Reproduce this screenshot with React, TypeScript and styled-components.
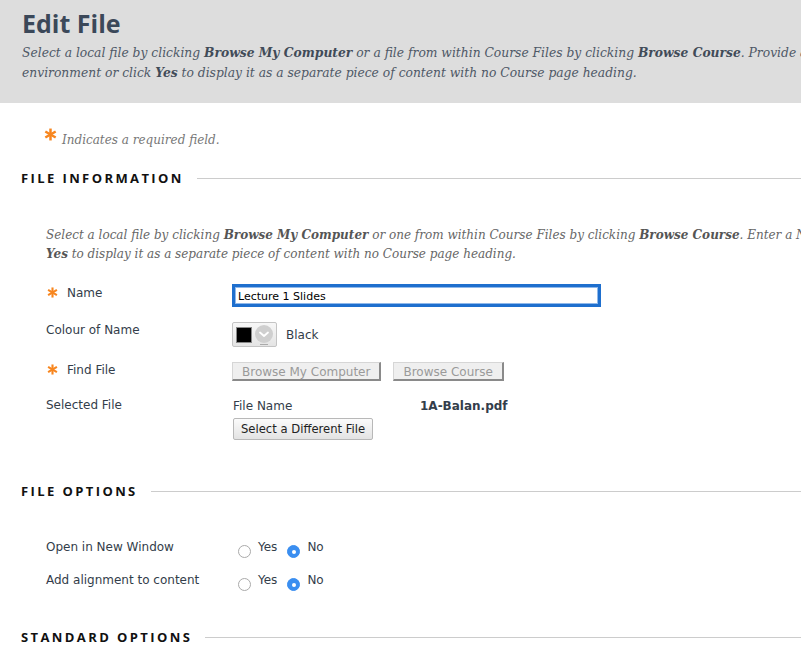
import React from "react";
import styled, { createGlobalStyle } from "styled-components";

const Global = createGlobalStyle`
  html, body { margin: 0; padding: 0; background: #fff; overflow: hidden; }
  body { font-family: "DejaVu Sans", "Liberation Sans", sans-serif; }
`;

const serif = `"DejaVu Serif", "Liberation Serif", serif`;
const sans = `"DejaVu Sans", "Liberation Sans", sans-serif`;
const heading = `"Open Sans", "DejaVu Sans", sans-serif`;

const Page = styled.div`
  width: 801px;
  height: 653px;
  overflow: hidden;
`;

const Header = styled.header`
  background: #dddddd;
  height: 103px;
  box-sizing: border-box;
  padding: 5px 0 0 22px;
`;

const Title = styled.h1`
  margin: 0;
  font-family: ${heading};
  font-size: 25px;
  line-height: 36px;
  font-weight: bold;
  color: #3b4859;
`;

const Lead = styled.p`
  margin: 2px 0 0;
  font-family: ${serif};
  font-style: italic;
  font-size: 12.3px;
  line-height: 20px;
  color: #4e5866;
  white-space: nowrap;
  b { font-weight: bold; color: #414b58; }
`;

const Body = styled.div`
  padding: 24px 0 0 0;
`;

const Required = styled.div`
  display: flex;
  align-items: flex-start;
  padding-left: 44px;
  height: 22px;
  font-family: ${serif};
  font-style: italic;
  font-size: 12px;
  color: #777;
`;

const StarBox = styled.span<{ $big?: boolean }>`
  display: inline-flex;
  width: ${(p) => (p.$big ? "18px" : "20px")};
  padding-top: ${(p) => (p.$big ? "1px" : "2px")};
  padding-left: ${(p) => (p.$big ? "0" : "1px")};
  flex-shrink: 0;
`;

const ReqText = styled.span`
  padding-top: 6px;
`;

const SectionHead = styled.div<{ $mt: number }>`
  display: flex;
  align-items: center;
  gap: 13px;
  padding-left: 21px;
  margin-top: ${(p) => p.$mt}px;
  height: 16px;
  font-family: ${heading};
  font-weight: bold;
  font-size: 13px;
  letter-spacing: 2.4px;
  color: #111;
  white-space: nowrap;
  &::after {
    content: "";
    flex: 1;
    height: 1px;
    background: #cccccc;
  }
`;

const Intro = styled.p`
  margin: 40px 0 0 46px;
  font-family: ${serif};
  font-style: italic;
  font-size: 12px;
  line-height: 19px;
  color: #666;
  white-space: nowrap;
  b { font-weight: bold; color: #555; }
`;

const Form = styled.div<{ $mt: number }>`
  display: grid;
  grid-template-columns: 186px 1fr;
  margin: ${(p) => p.$mt}px 0 0 46px;
`;

const Label = styled.div<{ $h: number }>`
  height: ${(p) => p.$h}px;
  display: flex;
  align-items: flex-start;
  font-family: ${sans};
  font-size: 12px;
  color: #333d4a;
  white-space: nowrap;
`;

const LabelText = styled.span<{ $pt: number }>`
  padding-top: ${(p) => p.$pt}px;
`;

const Field = styled.div<{ $h: number }>`
  height: ${(p) => p.$h}px;
  display: flex;
  align-items: flex-start;
  font-family: ${sans};
  font-size: 12px;
  color: #333d4a;
`;

const TextInput = styled.div`
  width: 369px;
  height: 23px;
  box-sizing: border-box;
  border: 3px solid #1e6fce;
  box-shadow: inset 0 0 0 1px #8fb8ea;
  background: #fff;
  font-family: ${sans};
  font-size: 11px;
  color: #000;
  padding: 2px 0 0 3px;
  line-height: 15px;
  margin-top: -1px;
`;

const Picker = styled.div`
  width: 45px;
  height: 25px;
  box-sizing: border-box;
  border: 1px solid #c4c4c4;
  border-radius: 2px;
  background: linear-gradient(#f7f7f7, #e4e4e4);
  display: flex;
  align-items: center;
  padding-left: 3px;
  gap: 2px;
`;

const Swatch = styled.div`
  width: 16px;
  height: 16px;
  background: #000;
  border: 1px solid #888;
  box-sizing: border-box;
`;

const ColourName = styled.span`
  margin: 6px 0 0 9px;
`;

const GreyButton = styled.div`
  height: 19px;
  box-sizing: border-box;
  padding: 2px 9px 0 9px;
  background: #efefef;
  border: 1px solid #d6d6d6;
  border-right: 2px solid #8a8a8a;
  border-bottom: 2px solid #8a8a8a;
  color: #9a9a9a;
  font-family: ${sans};
  font-size: 12px;
  line-height: 14px;
  white-space: nowrap;
  & + & { margin-left: 12px; }
`;

const FileCol = styled.div`
  display: flex;
  flex-direction: column;
  padding-left: 1px;
`;

const FileLine = styled.div`
  display: flex;
  padding-top: 2px;
  height: 14px;
`;

const FileKey = styled.span`
  width: 187px;
`;

const FileVal = styled.span`
  font-weight: bold;
`;

const Button = styled.div`
  margin-top: 5px;
  height: 22px;
  box-sizing: border-box;
  padding: 3px 7px 0 7px;
  display: inline-block;
  background: linear-gradient(#fbfbfb, #e3e3e3);
  border: 1px solid #b8b8b8;
  border-radius: 2px;
  color: #222;
  font-size: 11.6px;
  line-height: 14px;
  white-space: nowrap;
  align-self: flex-start;
`;

const RadioGroup = styled.div`
  display: flex;
  align-items: flex-start;
  padding-left: 6px;
`;

const Radio = styled.span<{ $on?: boolean }>`
  width: 13px;
  height: 13px;
  box-sizing: border-box;
  border-radius: 50%;
  margin-top: 6px;
  border: 1px solid ${(p) => (p.$on ? "#3a8ef0" : "#aaaaaa")};
  background: ${(p) => (p.$on ? "#3a8ef0" : "#fff")};
  display: flex;
  align-items: center;
  justify-content: center;
  &::after {
    content: "";
    width: 4px;
    height: 4px;
    border-radius: 50%;
    background: ${(p) => (p.$on ? "#fff" : "transparent")};
  }
`;

const RadioText = styled.span`
  margin: 0 10px 0 7px;
  padding-top: 1px;
`;

const Asterisk = ({ size }: { size: number }) => (
  <svg width={size} height={size} viewBox="0 0 12 12">
    <g stroke="#f7861f" strokeWidth="2.3" strokeLinecap="butt">
      <line x1="6" y1="0.5" x2="6" y2="11.5" />
      <line x1="1.2" y1="3.2" x2="10.8" y2="8.8" />
      <line x1="1.2" y1="8.8" x2="10.8" y2="3.2" />
    </g>
  </svg>
);

const Star = ({ big }: { big?: boolean }) => (
  <StarBox $big={big}>
    <Asterisk size={big ? 13 : 11} />
  </StarBox>
);

const ChevronCircle = () => (
  <svg width="20" height="22" viewBox="0 0 20 22">
    <circle cx="10" cy="10" r="9" fill="#cfcfcf" />
    <path d="M6 8.5 L10 12 L14 8.5" stroke="#fff" strokeWidth="1.8" fill="none" strokeLinecap="round" strokeLinejoin="round" />
    <rect x="6" y="20" width="8" height="1" fill="#aaa" />
  </svg>
);

export default function App() {
  return (
    <Page>
      <Global />
      <Header>
        <Title>Edit File</Title>
        <Lead>
          Select a local file by clicking <b>Browse My Computer</b> or a file from within Course Files by clicking{" "}
          <b>Browse Course</b>. Provide a name and choose whether to display it within the Course
          <br />
          environment or click <b>Yes</b> to display it as a separate piece of content with no Course page heading.
        </Lead>
      </Header>
      <Body>
        <Required>
          <Star big />
          <ReqText>Indicates a required field.</ReqText>
        </Required>
        <SectionHead $mt={21}>FILE INFORMATION</SectionHead>
        <Intro>
          Select a local file by clicking <b>Browse My Computer</b> or one from within Course Files by clicking{" "}
          <b>Browse Course</b>. Enter a Name and choose whether to display it or click
          <br />
          <b>Yes</b> to display it as a separate piece of content with no Course page heading.
        </Intro>
        <Form $mt={21}>
          <Label $h={37}>
            <Star />
            <LabelText $pt={1}>Name</LabelText>
          </Label>
          <Field $h={37}>
            <TextInput>Lecture 1 Slides</TextInput>
          </Field>

          <Label $h={40}>
            <LabelText $pt={1}>Colour of Name</LabelText>
          </Label>
          <Field $h={40}>
            <Picker>
              <Swatch />
              <ChevronCircle />
            </Picker>
            <ColourName>Black</ColourName>
          </Field>

          <Label $h={35}>
            <Star />
            <LabelText $pt={1}>Find File</LabelText>
          </Label>
          <Field $h={35}>
            <GreyButton>Browse My Computer</GreyButton>
            <GreyButton>Browse Course</GreyButton>
          </Field>

          <Label $h={60}>
            <LabelText $pt={1}>Selected File</LabelText>
          </Label>
          <Field $h={60}>
            <FileCol>
              <FileLine>
                <FileKey>File Name</FileKey>
                <FileVal>1A-Balan.pdf</FileVal>
              </FileLine>
              <Button>Select a Different File</Button>
            </FileCol>
          </Field>
        </Form>
        <SectionHead $mt={26}>FILE OPTIONS</SectionHead>
        <Form $mt={40}>
          <Label $h={33}>
            <LabelText $pt={1}>Open in New Window</LabelText>
          </Label>
          <Field $h={33}>
            <RadioGroup>
              <Radio />
              <RadioText>Yes</RadioText>
              <Radio $on />
              <RadioText>No</RadioText>
            </RadioGroup>
          </Field>
          <Label $h={33}>
            <LabelText $pt={1}>Add alignment to content</LabelText>
          </Label>
          <Field $h={33}>
            <RadioGroup>
              <Radio />
              <RadioText>Yes</RadioText>
              <Radio $on />
              <RadioText>No</RadioText>
            </RadioGroup>
          </Field>
        </Form>
        <SectionHead $mt={24}>STANDARD OPTIONS</SectionHead>
      </Body>
    </Page>
  );
}
